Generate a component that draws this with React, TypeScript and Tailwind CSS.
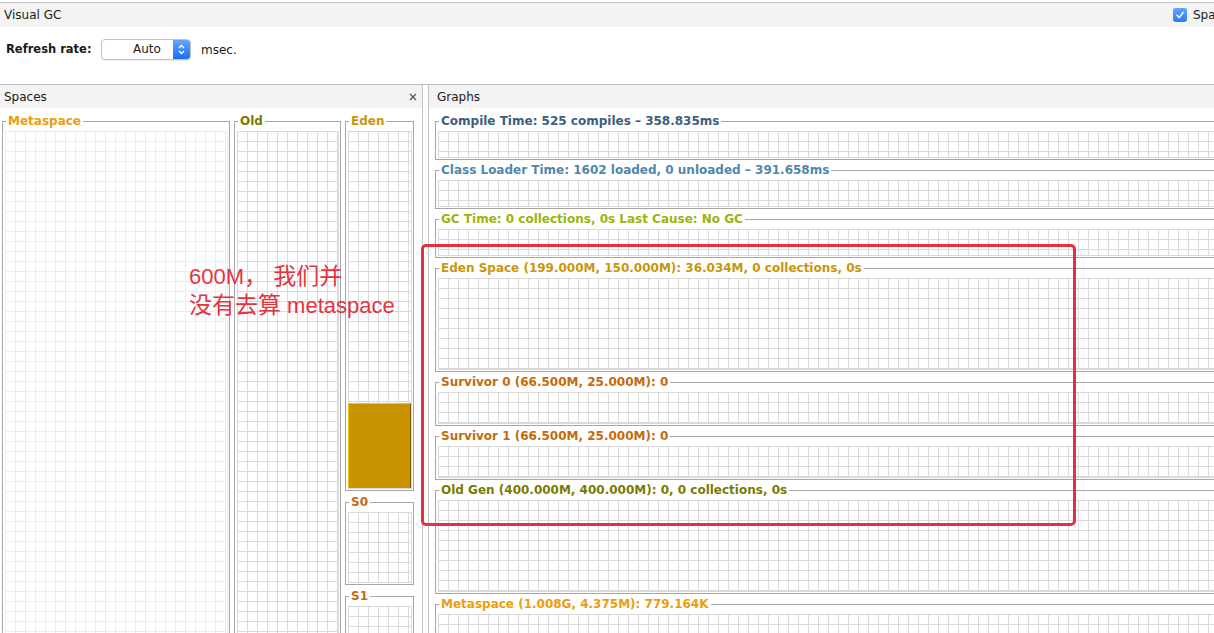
import React from 'react'

const grid =
  "[background-image:linear-gradient(to_right,#d9d9d9_1px,transparent_1px),linear-gradient(to_bottom,#d9d9d9_1px,transparent_1px)] [background-size:10px_10px] border-r border-b border-[#d9d9d9]"
const lightGrid =
  "[background-image:linear-gradient(to_right,#ececec_1px,transparent_1px),linear-gradient(to_bottom,#ececec_1px,transparent_1px)] [background-size:10px_10px] border-r border-b border-[#ececec]"

interface TitledProps {
  title: string
  color: string
  className?: string
  children?: React.ReactNode
}

// swing-style TitledBorder
function Titled({ title, color, className = '', children }: TitledProps) {
  return (
    <fieldset className={`min-w-0 border border-[#a6a6a6] pt-[3px] pb-[1px] pl-[2px] pr-[1px] ${className}`}>
      <legend className={`ml-[1px] px-[2px] text-[12px] leading-[14px] font-bold whitespace-nowrap ${color}`}>
        {title}
      </legend>
      {children}
    </fieldset>
  )
}

const graphs = [
  { title: 'Compile Time: 525 compiles \u2013 358.835ms', color: 'text-[#3c5e7f]', h: 'h-[27px]' },
  { title: 'Class Loader Time: 1602 loaded, 0 unloaded \u2013 391.658ms', color: 'text-[#4f87ab]', h: 'h-[27px]' },
  { title: 'GC Time: 0 collections, 0s Last Cause: No GC', color: 'text-[#9cb40c]', h: 'h-[27px]' },
  { title: 'Eden Space (199.000M, 150.000M): 36.034M, 0 collections, 0s', color: 'text-[#c9960b]', h: 'h-[92px]' },
  { title: 'Survivor 0 (66.500M, 25.000M): 0', color: 'text-[#c46a0c]', h: 'h-[32px]' },
  { title: 'Survivor 1 (66.500M, 25.000M): 0', color: 'text-[#c46a0c]', h: 'h-[32px]' },
  { title: 'Old Gen (400.000M, 400.000M): 0, 0 collections, 0s', color: 'text-[#7a7a02]', h: 'h-[92px]' },
  { title: 'Metaspace (1.008G, 4.375M): 779.164K', color: 'text-[#ec9c0e]', h: 'h-[92px]' },
]

export default function App() {
  return (
    <div className="relative h-[633px] w-[1214px] overflow-hidden bg-white text-[#1a1a1a] [font-family:'DejaVu_Sans',sans-serif]">
      {/* title bar */}
      <div className="mt-[2px] flex h-[25px] items-center border-t border-[#c2c2c2] bg-[#f3f3f3] pl-[4px]">
        <span className="text-[12px]">Visual GC</span>
        <div className="ml-auto flex w-[41px] shrink-0 items-center gap-[6px] overflow-hidden whitespace-nowrap">
          <span className="flex h-[14px] w-[14px] shrink-0 items-center justify-center rounded-[3px] [background-image:linear-gradient(#5ea5ff,#2a7cf5)]">
            <svg width="10" height="10" viewBox="0 0 10 10">
              <path d="M2 5.2 L4.2 7.6 L8.2 2.4" fill="none" stroke="white" strokeWidth="1.5" strokeLinecap="round" strokeLinejoin="round" />
            </svg>
          </span>
          <span className="text-[12px]">Spaces</span>
        </div>
      </div>

      {/* refresh rate */}
      <div className="flex h-[57px] items-start pl-[6px] pt-[12px]">
        <span className="w-[95px] shrink-0 pt-[2px] text-[11.5px] font-bold">Refresh rate:</span>
        <div className="flex h-[21px] w-[90px] items-stretch overflow-hidden rounded-[4px] border border-[#c3c3c3] shadow-[0_1px_1px_rgba(0,0,0,0.08)]">
          <span className="flex-1 pl-[31px] text-[12px] leading-[19px]">Auto</span>
          <span className="flex w-[17px] items-center justify-center [background-image:linear-gradient(#62a8ff,#1a6ef3)]">
            <svg width="9" height="13" viewBox="0 0 9 13">
              <path d="M2 5 L4.5 2.5 L7 5" fill="none" stroke="white" strokeWidth="1.3" />
              <path d="M2 8 L4.5 10.5 L7 8" fill="none" stroke="white" strokeWidth="1.3" />
            </svg>
          </span>
        </div>
        <span className="ml-[10px] pt-[2px] text-[12px]">msec.</span>
      </div>

      {/* panels */}
      <div className="flex h-[560px] w-[1300px] border-t border-[#bdbdbd]">
        <div className="w-[423px] shrink-0 border-r border-[#c4c4c4]">
          <div className="flex h-[23px] items-center justify-between bg-[#f3f3f3] pl-[4px] pr-[5px]">
            <span className="text-[12px]">Spaces</span>
            <svg width="8" height="8" viewBox="0 0 8 8">
              <path d="M1 1 L7 7 M7 1 L1 7" stroke="#5a5a5a" strokeWidth="1.4" />
            </svg>
          </div>
          <div className="flex gap-[4px] pl-[2px] pt-[6px]">
            <Titled title="Metaspace" color="text-[#ec9c0e]" className="w-[228px]">
              <div className={`h-[540px] ${lightGrid}`} />
            </Titled>
            <Titled title="Old" color="text-[#7a7a02]" className="w-[107px]">
              <div className={`h-[540px] ${grid}`} />
            </Titled>
            <div className="flex w-[69px] shrink-0 flex-col gap-[4px]">
              <Titled title="Eden" color="text-[#c9960b]">
                <div className={`flex h-[358px] flex-col justify-end ${grid}`}>
                  <div className="h-[85px] border-t border-l border-r border-[#f3c30c] border-r-[#7d5c00] bg-[#c99300]" />
                </div>
              </Titled>
              <Titled title="S0" color="text-[#c46a0c]">
                <div className={`h-[71px] ${grid}`} />
              </Titled>
              <Titled title="S1" color="text-[#c46a0c]">
                <div className={`h-[71px] ${grid}`} />
              </Titled>
            </div>
          </div>
        </div>

        <div className="ml-[5px] flex-1 border-l border-[#c4c4c4]">
          <div className="flex h-[23px] items-center bg-[#f3f3f3] pl-[8px]">
            <span className="text-[12px]">Graphs</span>
          </div>
          <div className="flex flex-col gap-[3px] pl-[6px] pt-[6px]">
            {graphs.map(g => (
              <Titled key={g.title} title={g.title} color={g.color}>
                <div className={`${g.h} ${grid}`} />
              </Titled>
            ))}
          </div>
        </div>
      </div>

      {/* annotation */}
      <div className="absolute left-[189px] top-[262px] text-[22px] leading-[29px] text-[#e3343f] [font-family:'Liberation_Sans','Noto_Sans_CJK_SC',sans-serif]">
        <div className="whitespace-nowrap">
          600M<span className="text-[23px]">，</span> <span className="text-[23px]">我们并</span>
        </div>
        <div className="whitespace-nowrap">
          <span className="text-[23px]">没有去算</span> metaspace
        </div>
      </div>
      <div className="absolute left-[421px] top-[244px] h-[282px] w-[655px] rounded-[5px] border-[3px] border-[#e1333f]" />
    </div>
  )
}
